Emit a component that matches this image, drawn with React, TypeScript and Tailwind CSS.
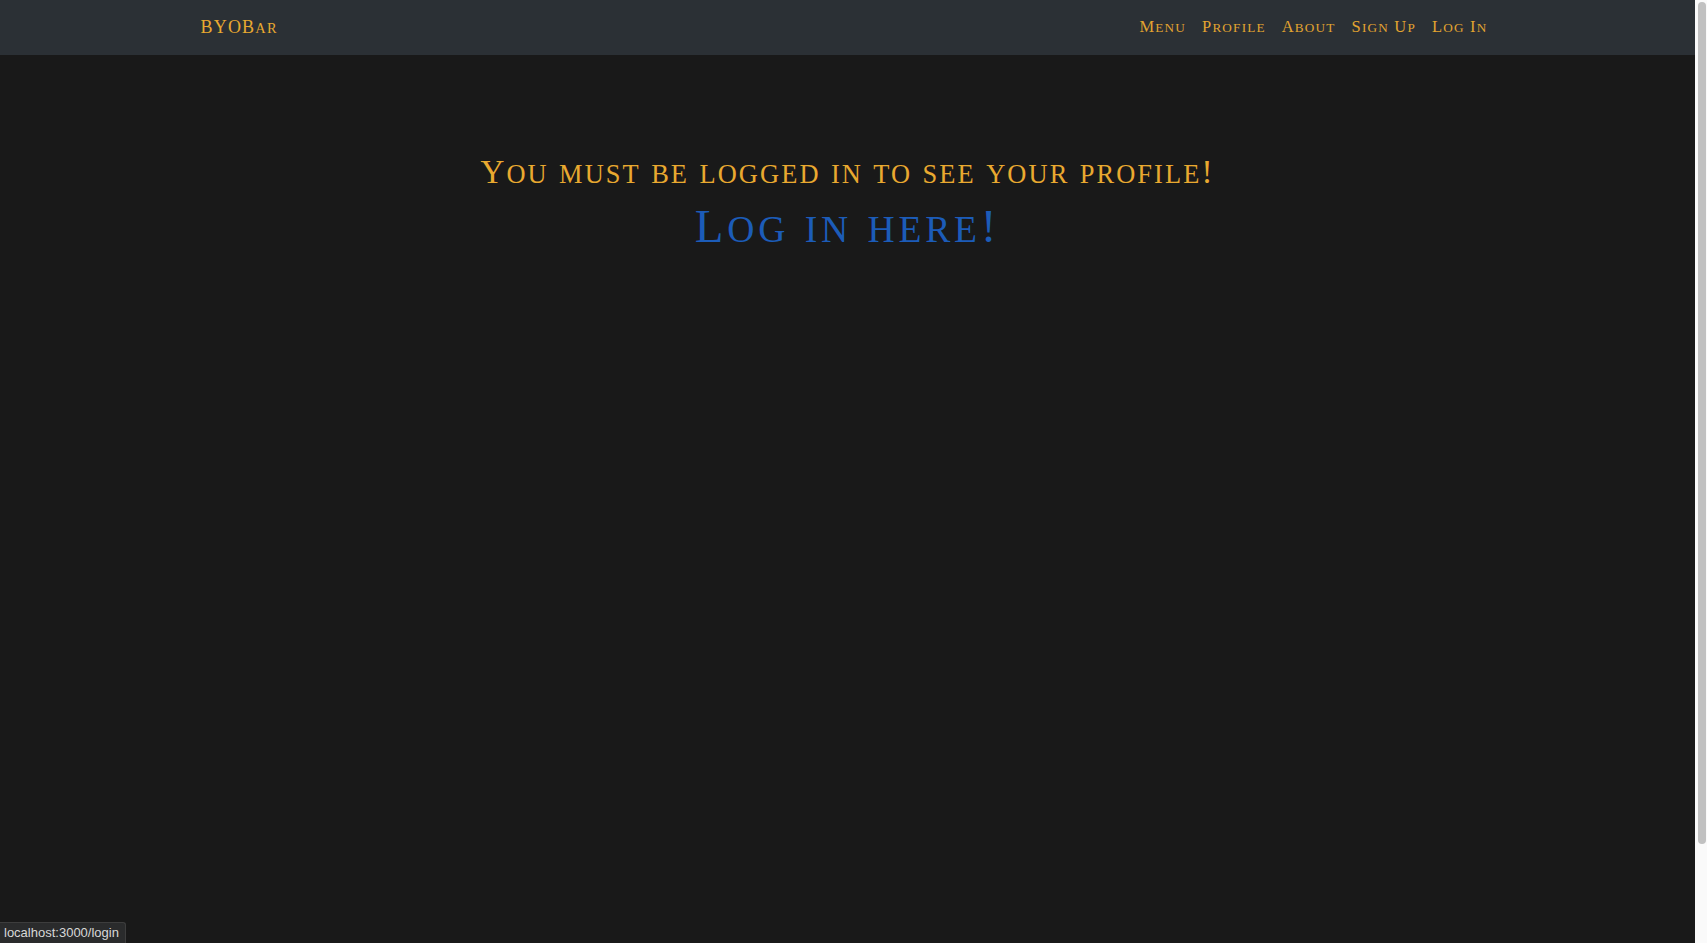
import React from "react";

function SC({ text, small = "text-[0.8em]" }: { text: string; small?: string }) {
  const runs = text.match(/[a-z]+|[^a-z]+/g) || [];
  return (
    <>
      {runs.map((r, i) =>
        /^[a-z]+$/.test(r) ? (
          <span key={i} className={`${small} uppercase`}>
            {r}
          </span>
        ) : (
          <span key={i}>{r}</span>
        )
      )}
    </>
  );
}

const links = ["Menu", "Profile", "About", "Sign Up", "Log In"];

export default function App() {
  return (
    <div
      className="flex h-screen overflow-hidden bg-[#191919]"
      style={{ fontFamily: '"Liberation Serif", serif' }}
    >
      <div className="min-w-0 flex-1">
        <nav className="h-[55px] bg-[#2b3035]">
          <div className="mx-auto flex h-full w-[1320px] items-center justify-between px-3">
            <a className="pl-[1px] text-[18px] tracking-[1.2px] text-[#e9a930]" href="#">
              <SC text="BYOBar" />
            </a>
            <ul className="flex items-center">
              {links.map((l) => (
                <li key={l}>
                  <a className="block px-2 text-[16.5px] tracking-[1.2px] text-[#e2a430]" href="#">
                    <SC text={l} />
                  </a>
                </li>
              ))}
            </ul>
          </div>
        </nav>
        <main className="pt-[98px] text-center">
          <h2 className="mb-[5px] text-[33px] leading-[1.2] tracking-[2.1px] text-[#e9a930]">
            <SC text="You must be logged in to see your profile!" />
          </h2>
          <h1 className="text-[47px] leading-[1.2] tracking-[3.8px]">
            <a className="text-[#1c5cb8]" href="#">
              <SC text="Log in here!" />
            </a>
          </h1>
        </main>
      </div>
      <div className="flex w-[12px] shrink-0 flex-col bg-[#fafafa] pt-[2px] pb-[99px] pl-[3px] pr-[1px]">
        <div className="flex-1 rounded-full bg-[#c1c1c1]" />
      </div>
      <div
        className="fixed bottom-0 left-0 flex h-[21px] items-center rounded-tr-[3px] border-t border-r border-[#3d3d3d] bg-[#2a2b2c] pl-[4px] pr-[6px] text-[13px] text-[#d8d8d8]"
        style={{ fontFamily: '"Liberation Sans", Arial, sans-serif' }}
      >
        localhost:3000/login
      </div>
    </div>
  );
}
